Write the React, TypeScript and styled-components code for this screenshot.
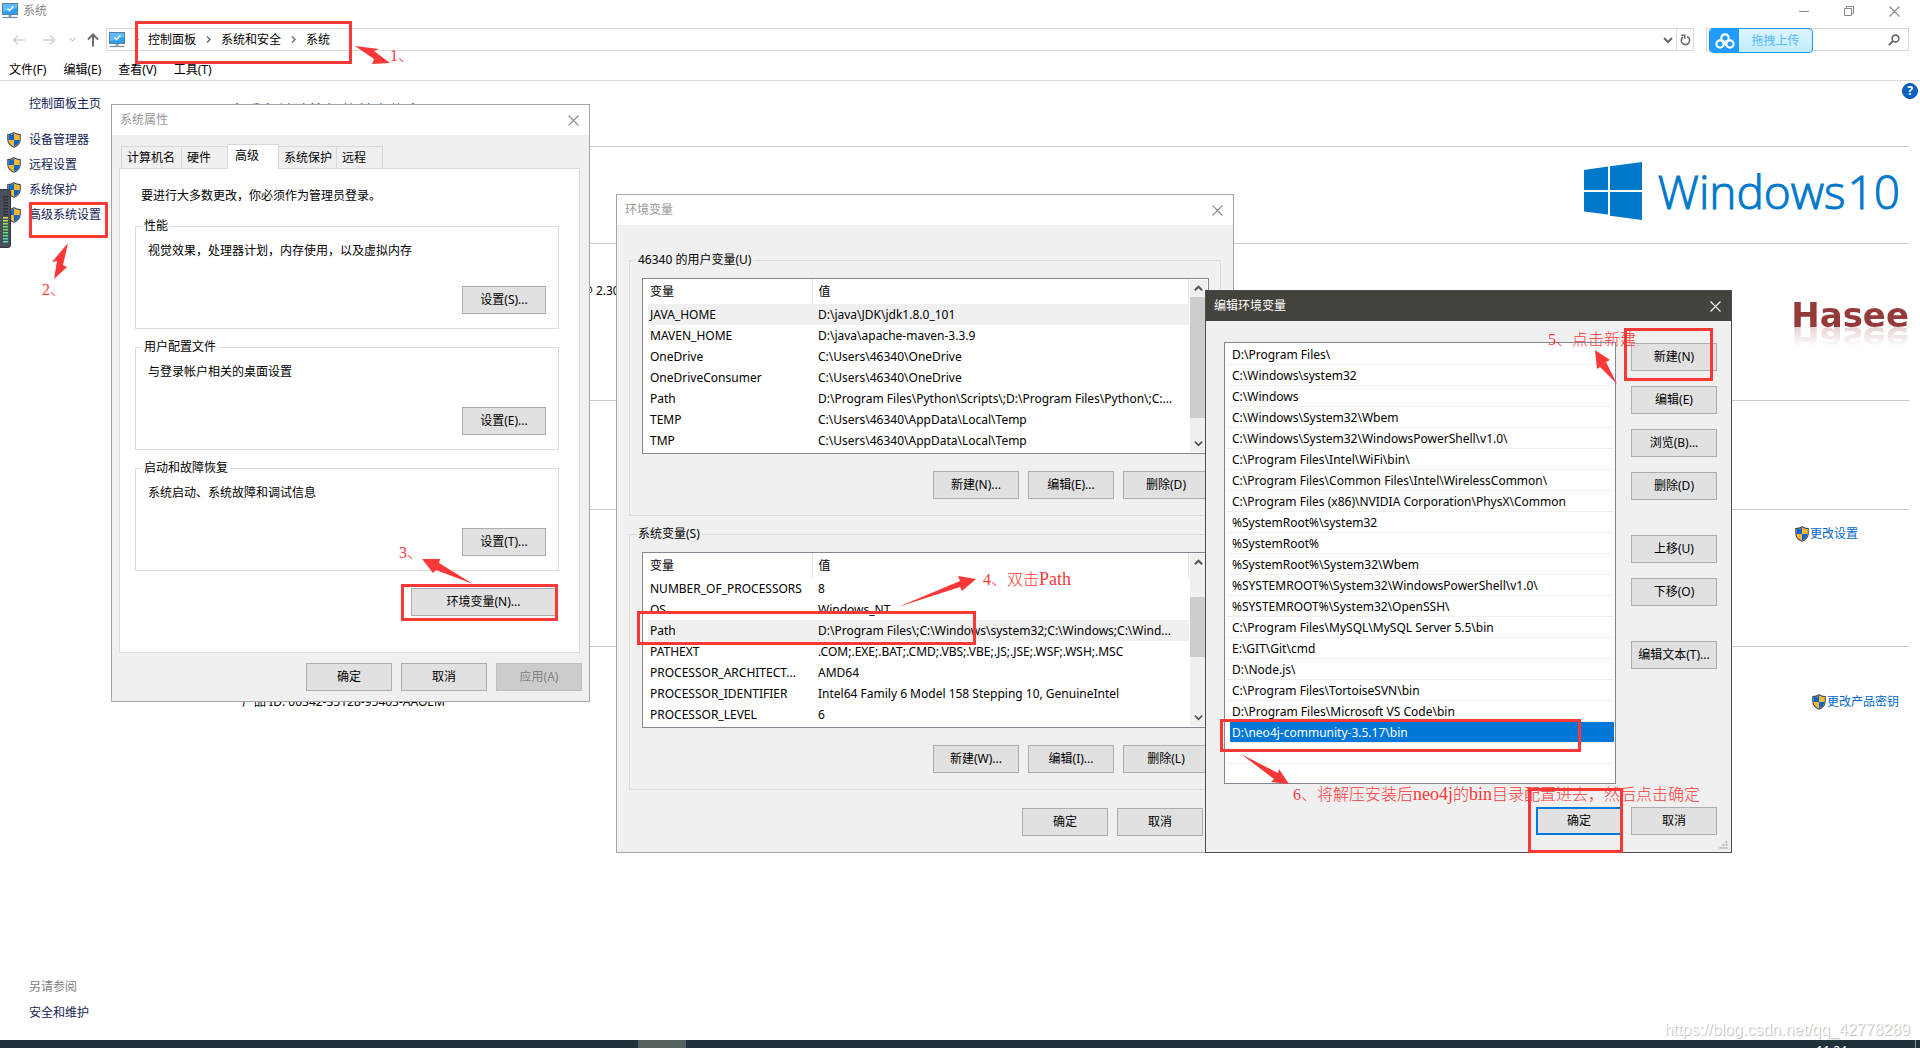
import React from 'react';
import styled, { createGlobalStyle, css } from 'styled-components';

const RED = '#fb3838';
const UI_FONT = '"Noto Sans", "Noto Sans CJK SC", sans-serif';

const GlobalStyle = createGlobalStyle`
  *, *::before, *::after { box-sizing: border-box; }
  body {
    margin: 0;
    background: #fff;
    color: #000;
    font: 12px/16px ${UI_FONT};
    overflow: hidden;
  }
  button, input { font: inherit; color: inherit; }
  a { color: inherit; text-decoration: none; }
  svg { display: block; flex: none; }
`;

/* ---------- Desktop and system window ---------- */

const Desktop = styled.div`
  position: relative;
  height: 100vh;
  display: flex;
  flex-direction: column;
  overflow: hidden;
`;

const SystemWindow = styled.main`
  flex: 1;
  min-height: 0;
  display: flex;
  flex-direction: column;
`;

const WindowTitle = styled.header`
  display: flex;
  align-items: center;
  justify-content: space-between;
  height: 22px;
  padding: 0 20px 0 2px;
  color: #888;
`;

const TitleText = styled.div`
  display: flex;
  align-items: center;
  gap: 5px;
`;

const WindowControls = styled.div`
  display: flex;
  gap: 35px;
`;

const IconButton = styled.button<{ $width?: number }>`
  display: flex;
  align-items: center;
  justify-content: center;
  width: ${p => (p.$width ? `${p.$width}px` : 'auto')};
  padding: 0;
  border: 0;
  background: none;
`;

const NavRow = styled.div`
  display: flex;
  height: 23px;
  margin-top: 6px;
  padding: 0 11px 0 4px;
`;

const CrumbChevron = styled.span`
  display: flex;
  justify-content: center;
  width: 7px;
  margin: 0 9px;
`;

const AddressBar = styled.nav`
  flex: 1;
  display: flex;
  align-items: center;
  padding-left: 2px;
  border: 1px solid #d9d9d9;
  ${CrumbChevron}:first-of-type { margin: 0 8px; }
`;

const AddressButtons = styled.div`
  display: flex;
  align-self: stretch;
  margin-left: auto;
`;

const RefreshCell = styled.div`
  display: flex;
  border-left: 1px solid #d9d9d9;
`;

const SearchBox = styled.div`
  display: flex;
  width: 203px;
  margin-left: 12px;
  padding-left: 2px;
  border: 1px solid #d9d9d9;
`;

const SearchInput = styled.input`
  flex: 1;
  min-width: 0;
  border: 0;
  outline: 0;
  background: none;
`;

const UploadButton = styled.button`
  display: flex;
  align-items: center;
  flex: none;
  width: 104px;
  height: 25px;
  margin-top: -1px;
  padding: 0;
  overflow: hidden;
  border: 1px solid #1a97ff;
  border-radius: 4px;
  background: linear-gradient(#ddf4fe, #c3edff);
  color: #55b9fb;
`;

const UploadMark = styled.span`
  display: flex;
  align-items: center;
  justify-content: center;
  width: 29px;
  height: 25px;
  background: #229bff;
`;

const UploadLabel = styled.span`
  flex: 1;
  text-align: center;
`;

const MenuBar = styled.nav`
  display: flex;
  gap: 17px;
  height: 30px;
  padding: 11px 0 0 9px;
  border-bottom: 1px solid #dadada;
`;

const MenuItem = styled.button`
  height: 16px;
  padding: 0;
  border: 0;
  background: none;
`;

const WindowBody = styled.div`
  flex: 1;
  display: flex;
  min-height: 0;
`;

const Sidebar = styled.aside`
  display: flex;
  flex-direction: column;
  width: 224px;
  padding: 15px 0 19px 7px;
  color: #151c55;
`;

const SideLinks = styled.ul`
  margin: 15px 0 0;
  padding: 0;
  list-style: none;
`;

const SideItem = styled.li`
  display: flex;
  align-items: center;
  height: 25px;
`;

const ShieldLink = styled.a<{ $gap: number; $color?: string }>`
  display: inline-flex;
  align-items: center;
  gap: ${p => p.$gap}px;
  color: ${p => p.$color ?? 'inherit'};
`;

const SideHome = styled.a`
  margin-left: 22px;
`;

const SeeAlso = styled.div`
  display: flex;
  flex-direction: column;
  gap: 10px;
  margin: auto 0 0 22px;
`;

const SeeAlsoTitle = styled.span`
  color: #808080;
`;

const Content = styled.section`
  position: relative;
  flex: 1;
  padding-right: 11px;
`;

const ContentTitle = styled.h1`
  height: 65px;
  margin: 0;
  padding: 20px 0 0 5px;
  color: #003399;
  font-size: 16px;
  line-height: 20px;
  font-weight: 400;
`;

const HelpButton = styled.button`
  position: absolute;
  top: 2px;
  right: 2px;
  width: 16px;
  height: 16px;
  padding: 0;
  border: 1px solid #0a4f9c;
  border-radius: 50%;
  background: #0a62c9;
  color: #fff;
  font-weight: 700;
  line-height: 14px;
  text-align: center;
`;

const InfoSection = styled.div<{ $height: number; $top: number; $right?: number }>`
  display: flex;
  align-items: flex-start;
  justify-content: space-between;
  min-height: ${p => p.$height}px;
  padding: ${p => p.$top}px ${p => p.$right ?? 0}px 0 18px;
  border-top: 1px solid #cbcbcb;
`;

const WindowsBrand = styled.div`
  display: flex;
  align-items: center;
  gap: 16px;
  margin-left: auto;
  color: #0078ca;
  font: 300 46px/58px "Open Sans", sans-serif;
  -webkit-text-stroke: 1px #0078ca;
`;

const WindowsWord = styled.span`
  display: flex;
  gap: 2px;
`;

const Hasee = styled.div`
  margin-top: 18px;
  color: #953a3a;
  font: 700 34px/28px "DejaVu Sans", sans-serif;
  -webkit-box-reflect: below -4px linear-gradient(transparent 20%, rgba(0, 0, 0, 0.25));
`;

const CpuText = styled.span`
  padding-left: 340px;
  white-space: pre;
`;

const Taskbar = styled.footer`
  display: flex;
  justify-content: space-between;
  height: 8px;
  padding: 0 4px 0 638px;
  overflow: hidden;
  background: #20323b;
`;

const TaskbarApp = styled.span`
  width: 48px;
  background: #56615f;
`;

const Clock = styled.time`
  padding: 3px 68px 0 0;
  border-right: 1px solid #8a9296;
  color: #fff;
`;

/* ---------- Dialogs ---------- */

const DialogFrame = styled.section<{ $left: number; $top: number; $width: number; $active?: boolean }>`
  position: absolute;
  left: ${p => p.$left}px;
  top: ${p => p.$top}px;
  width: ${p => p.$width}px;
  border: 1px solid ${p => (p.$active ? '#4c4c4c' : '#a6a6a6')};
  background: #f0f0f0;
`;

const DialogTitle = styled.header<{ $active?: boolean }>`
  display: flex;
  align-items: center;
  justify-content: space-between;
  height: 30px;
  padding: 0 10px 0 8px;
  background: ${p => (p.$active ? '#43423d' : '#fff')};
  color: ${p => (p.$active ? '#fff' : '#999')};
`;

const DialogBody = styled.div<{ $padding: string }>`
  padding: ${p => p.$padding};
`;

const PushButton = styled.button<{ $width?: number; $primary?: boolean }>`
  width: ${p => p.$width ?? 86}px;
  height: 28px;
  padding: 0;
  border: ${p => (p.$primary ? '2px solid #0078d7' : '1px solid #adadad')};
  background: #e1e1e1;
  white-space: nowrap;
  &:disabled {
    border-color: #bfbfbf;
    background: #ccc;
    color: #838383;
  }
`;

const ButtonRow = styled.div<{ $top: number }>`
  display: flex;
  justify-content: flex-end;
  gap: 9px;
  margin-top: ${p => p.$top}px;
`;

const Group = styled.fieldset<{ $top: number }>`
  min-width: 0;
  margin: ${p => p.$top}px 0 0;
  padding: 0;
  border: 1px solid #dcdcdc;
`;

const GroupTitle = styled.legend`
  height: 16px;
  margin-left: 6px;
  padding: 0 2px;
`;

const GroupBody = styled.div<{ $padding: string }>`
  padding: ${p => p.$padding};
`;

const Text = styled.p<{ $indent?: number }>`
  margin: 0 0 0 ${p => p.$indent ?? 0}px;
`;

const Tabs = styled.div`
  display: flex;
  align-items: flex-end;
  padding-left: 2px;
`;

const Tab = styled.button<{ $width: number; $selected?: boolean }>`
  width: ${p => p.$width}px;
  height: 22px;
  padding: 0 0 0 5px;
  border: 1px solid #d9d9d9;
  border-width: 1px 1px 0 0;
  background: #f0f0f0;
  text-align: left;
  &:first-child { border-left-width: 1px; }
  ${p =>
    p.$selected &&
    css`
      position: relative;
      height: 25px;
      margin-bottom: -1px;
      padding: 0 0 3px 7px;
      background: #fff;
    `}
`;

const TabPanel = styled.div`
  margin-right: 2px;
  padding: 19px 20px 36px 15px;
  border: 1px solid #dcdcdc;
  background: #fff;
`;

const EnvButtonRow = styled(ButtonRow)`
  padding-right: 3px;
`;

/* ---------- Variable lists ---------- */

const ListView = styled.div`
  display: flex;
  height: 176px;
  padding-left: 5px;
  border: 1px solid #828790;
  background: #fff;
`;

const VarTable = styled.table`
  flex: 1;
  align-self: flex-start;
  table-layout: fixed;
  border-collapse: collapse;
  th {
    height: 25px;
    padding: 0 0 0 2px;
    border-right: 1px solid #e5e5e5;
    font-weight: 400;
    text-align: left;
  }
  td {
    height: 21px;
    padding: 0 0 0 2px;
    overflow: hidden;
    white-space: nowrap;
  }
  th + th, td + td { padding-left: 6px; }
`;

const NameCol = styled.col`
  width: 164px;
`;

const VarRow = styled.tr<{ $selected: boolean }>`
  background: ${p => (p.$selected ? '#f0f0f0' : 'transparent')};
`;

const ScrollBar = styled.div`
  display: flex;
  flex-direction: column;
  width: 17px;
  margin: 1px;
  background: #f0f0f0;
`;

const ScrollTrack = styled.div<{ $before: number }>`
  flex: 1;
  padding-top: ${p => p.$before}px;
`;

const ScrollThumb = styled.div<{ $size: number }>`
  height: ${p => p.$size}px;
  background: #cdcdcd;
`;

const ScrollArrow = styled.button`
  display: flex;
  align-items: center;
  justify-content: center;
  height: 17px;
  padding: 0;
  border: 0;
  background: #f0f0f0;
`;

/* ---------- Path editor ---------- */

const EditorColumns = styled.div`
  display: flex;
  gap: 15px;
`;

const PathList = styled.ul`
  flex: 1;
  margin: 0;
  padding: 1px 1px 19px;
  border: 1px solid #828790;
  background: #fff;
  list-style: none;
`;

const PathItem = styled.li`
  height: 21px;
  padding-left: 4px;
  border-bottom: 1px solid #f0f0f0;
`;

const PathText = styled.span<{ $selected: boolean }>`
  display: block;
  height: 20px;
  padding-left: 2px;
  line-height: 22px;
  ${p =>
    p.$selected &&
    css`
      background: #0078d7;
      color: #fff;
    `}
`;

const EditorButtons = styled.div`
  display: flex;
  flex-direction: column;
  gap: 35px;
  padding-top: 1px;
`;

const ButtonStack = styled.div`
  display: flex;
  flex-direction: column;
  gap: 15px;
`;

const Grip = styled.div`
  position: absolute;
  right: 3px;
  bottom: 2px;
`;

/* ---------- Overlays ---------- */

const Marker = styled.div<{ $x: number; $y: number; $w: number; $h: number }>`
  position: absolute;
  left: ${p => p.$x}px;
  top: ${p => p.$y}px;
  width: ${p => p.$w}px;
  height: ${p => p.$h}px;
  border: 3px solid ${RED};
  pointer-events: none;
`;

const Note = styled.div<{ $x: number; $y: number }>`
  position: absolute;
  left: ${p => p.$x}px;
  top: ${p => p.$y}px;
  color: ${RED};
  font: 300 16px/20px "Liberation Serif", "Noto Sans CJK SC", serif;
  white-space: nowrap;
`;

const NoteWord = styled.span`
  font-size: 18px;
`;

const Arrows = styled.svg`
  position: absolute;
  left: 0;
  top: 0;
  pointer-events: none;
`;

const LevelWidget = styled.div`
  position: absolute;
  left: -3px;
  top: 189px;
  width: 14px;
  height: 59px;
  border: 1px solid #343741;
  border-radius: 3px;
  background: #4b4e5b;
`;

const Watermark = styled.div`
  position: absolute;
  right: 10px;
  bottom: 8px;
  color: rgba(255, 255, 255, 0.9);
  font: 16px/20px "Liberation Sans", sans-serif;
  text-shadow: 1px 1px 1px #bbb;
`;

/* ---------- Icons ---------- */

const MonitorIcon = () => (
  <svg width="16" height="16" viewBox="0 0 16 16" aria-hidden="true">
    <rect x="0.5" y="0.5" width="15" height="11" fill="#2f9df2" stroke="#5a7f9e" />
    <path d="M1 1h14v4L1 9z" fill="#5cbcfb" />
    <path d="M5.5 5.5l2 2.2 4-4.4" fill="none" stroke="#fff" strokeWidth="1.4" />
    <path d="M6.5 12h3v2h-3z" fill="#8fa3b5" />
    <path d="M0.5 14.5h15" stroke="#7590a8" strokeWidth="1.2" />
  </svg>
);

const ShieldIcon = () => (
  <svg width="14" height="16" viewBox="0 0 14 16" aria-hidden="true">
    <path d="M7 1.6C5.5 2.7 3.6 3.2 1.4 3.2V8H7z" fill="#0b66c8" />
    <path d="M7 1.6c1.500 1.100 3.400 1.600 5.600 1.600V8H7z" fill="#fdb92b" />
    <path d="M1.400 8c.2 3 2.400 5 5.600 6.500V8z" fill="#fdb92b" />
    <path d="M12.600 8c-.2 3-2.400 5-5.600 6.500V8z" fill="#0b66c8" />
    <path
      d="M7 .8C5.400 2 3.300 2.600.8 2.600v4.800c0 3.600 2.300 6 6.200 7.800 3.900-1.800 6.200-4.200 6.200-7.800V2.600C10.700 2.600 8.600 2 7 .8z"
      fill="none"
      stroke="#4b4b4b"
      strokeWidth="1.2"
    />
  </svg>
);

const ArrowIcon = ({ dir }: { dir: 'left' | 'right' | 'up' }) => (
  <svg width="14" height="14" viewBox="0 0 14 14" fill="none" aria-hidden="true">
    {dir === 'left' && <path d="M13 7H1.500M6 2.500L1.500 7 6 11.500" stroke="#cfcfcf" strokeWidth="1.4" />}
    {dir === 'right' && <path d="M1 7h11.500M8 2.500L12.500 7 8 11.500" stroke="#cfcfcf" strokeWidth="1.4" />}
    {dir === 'up' && <path d="M7 13.500V2M2 6.500L7 1.500l5 5" stroke="#6d6d6d" strokeWidth="2" />}
  </svg>
);

const ChevronDown = ({ color, size, weight = 2 }: { color: string; size: number; weight?: number }) => (
  <svg width={size} height={size} viewBox="0 0 10 10" fill="none" aria-hidden="true">
    <path d="M1 3l4 4 4-4" stroke={color} strokeWidth={weight} />
  </svg>
);

const ChevronUp = () => (
  <svg width="9" height="9" viewBox="0 0 10 10" fill="none" aria-hidden="true">
    <path d="M1 7l4-4 4 4" stroke="#555" strokeWidth="2.2" />
  </svg>
);

const ChevronRight = () => (
  <svg width="7" height="9" viewBox="0 0 7 9" fill="none" aria-hidden="true">
    <path d="M2 1.500l3 3-3 3" stroke="#6a6a6a" strokeWidth="1.4" />
  </svg>
);

const CloseIcon = ({ color }: { color: string }) => (
  <svg width="11" height="11" viewBox="0 0 11 11" aria-hidden="true">
    <path d="M.5.5l10 10M10.500.5l-10 10" stroke={color} strokeWidth="1.1" />
  </svg>
);

const MinimizeIcon = () => (
  <svg width="10" height="10" viewBox="0 0 10 10" aria-hidden="true">
    <path d="M0 5.500h10" stroke="#888" />
  </svg>
);

const RestoreIcon = () => (
  <svg width="10" height="10" viewBox="0 0 10 10" fill="none" aria-hidden="true">
    <path d="M.5 2.500h7v7h-7zM2.500 2.500v-2h7v7h-2" stroke="#888" />
  </svg>
);

const RefreshIcon = () => (
  <svg width="11" height="12" viewBox="0 0 11 12" fill="none" aria-hidden="true">
    <path d="M7.200 2.600A4.200 4.200 0 1 1 3 3" stroke="#6e6e6e" strokeWidth="1.600" />
    <path d="M1.200 1.200h3.600v3.600" stroke="#6e6e6e" strokeWidth="1.500" />
  </svg>
);

const SearchIcon = () => (
  <svg width="12" height="12" viewBox="0 0 12 12" fill="none" aria-hidden="true">
    <circle cx="7.500" cy="4.500" r="3.400" stroke="#666" strokeWidth="1.600" />
    <path d="M5 7L.8 11.200" stroke="#666" strokeWidth="1.800" />
  </svg>
);

const CloudIcon = () => (
  <svg width="20" height="16" viewBox="0 0 20 16" fill="none" stroke="#fff" strokeWidth="2.200" aria-hidden="true">
    <circle cx="10" cy="5" r="3.700" />
    <circle cx="5" cy="11" r="3.600" />
    <circle cx="15" cy="11" r="3.600" />
    <path d="M7.500 8.500l5 5" />
  </svg>
);

const WindowsLogo = () => (
  <svg width="58" height="58" viewBox="0 0 58 58" fill="#0078ca" aria-hidden="true">
    <path d="M0 8l24-3.400V28H0zM26 4.300L58 0v28H26zM0 30h24v22.600L0 49.400zM26 30h32v28l-32-4.300z" />
  </svg>
);

const GripIcon = () => (
  <svg width="9" height="9" viewBox="0 0 9 9" fill="#b9b9b9" aria-hidden="true">
    <path d="M6.500 0h2v2h-2zM3.500 3h2v2h-2zM6.500 3h2v2h-2zM.5 6h2v2h-2zM3.500 6h2v2h-2zM6.500 6h2v2h-2z" />
  </svg>
);

const LevelBars = () => (
  <svg width="12" height="57" viewBox="0 0 12 57" aria-hidden="true">
    {Array.from({ length: 16 }, (_, i) => (
      <rect
        key={i}
        x="5"
        y={6 + i * 3}
        width="5"
        height="1.500"
        fill={i < 7 ? '#2f323b' : `hsl(${70 + (i - 7) * 12}, 75%, 62%)`}
      />
    ))}
  </svg>
);

/* ---------- Data ---------- */

type Variable = [name: string, value: string];

const userVars: Variable[] = [
  ['JAVA_HOME', 'D:\\java\\JDK\\jdk1.8.0_101'],
  ['MAVEN_HOME', 'D:\\java\\apache-maven-3.3.9'],
  ['OneDrive', 'C:\\Users\\46340\\OneDrive'],
  ['OneDriveConsumer', 'C:\\Users\\46340\\OneDrive'],
  ['Path', 'D:\\Program Files\\Python\\Scripts\\;D:\\Program Files\\Python\\;C:...'],
  ['TEMP', 'C:\\Users\\46340\\AppData\\Local\\Temp'],
  ['TMP', 'C:\\Users\\46340\\AppData\\Local\\Temp'],
];

const systemVars: Variable[] = [
  ['NUMBER_OF_PROCESSORS', '8'],
  ['OS', 'Windows_NT'],
  ['Path', 'D:\\Program Files\\;C:\\Windows\\system32;C:\\Windows;C:\\Wind...'],
  ['PATHEXT', '.COM;.EXE;.BAT;.CMD;.VBS;.VBE;.JS;.JSE;.WSF;.WSH;.MSC'],
  ['PROCESSOR_ARCHITECT...', 'AMD64'],
  ['PROCESSOR_IDENTIFIER', 'Intel64 Family 6 Model 158 Stepping 10, GenuineIntel'],
  ['PROCESSOR_LEVEL', '6'],
];

const paths = [
  'D:\\Program Files\\',
  'C:\\Windows\\system32',
  'C:\\Windows',
  'C:\\Windows\\System32\\Wbem',
  'C:\\Windows\\System32\\WindowsPowerShell\\v1.0\\',
  'C:\\Program Files\\Intel\\WiFi\\bin\\',
  'C:\\Program Files\\Common Files\\Intel\\WirelessCommon\\',
  'C:\\Program Files (x86)\\NVIDIA Corporation\\PhysX\\Common',
  '%SystemRoot%\\system32',
  '%SystemRoot%',
  '%SystemRoot%\\System32\\Wbem',
  '%SYSTEMROOT%\\System32\\WindowsPowerShell\\v1.0\\',
  '%SYSTEMROOT%\\System32\\OpenSSH\\',
  'C:\\Program Files\\MySQL\\MySQL Server 5.5\\bin',
  'E:\\GIT\\Git\\cmd',
  'D:\\Node.js\\',
  'C:\\Program Files\\TortoiseSVN\\bin',
  'D:\\Program Files\\Microsoft VS Code\\bin',
  'D:\\neo4j-community-3.5.17\\bin',
  '',
];

const arrowShapes = [
  '355,46 379,49 374,51 390,63 372,64 374,59',
  '68,243 52,262 57,261 54,279 67,267 63,265',
  '473,584 439,563 440,559 422,559 433,573 436,570',
  '898,607 960,581 958,576 976,579 962,591 960,587',
  '1617,384 1606,362 1610,360 1595,350 1597,369 1600,367',
  '1241,754 1278,773 1279,769 1289,784 1271,782 1274,779',
];

const markers = [
  [135, 21, 217, 43],
  [29, 202, 79, 36],
  [401, 584, 157, 37],
  [637, 611, 339, 34],
  [1624, 328, 89, 53],
  [1220, 719, 361, 33],
  [1528, 788, 95, 65],
];

/* ---------- Components ---------- */

const Dialog = ({
  title,
  left,
  top,
  width,
  active,
  children,
}: {
  title: string;
  left: number;
  top: number;
  width: number;
  active?: boolean;
  children: React.ReactNode;
}) => (
  <DialogFrame role="dialog" aria-label={title} $left={left} $top={top} $width={width} $active={active}>
    <DialogTitle $active={active}>
      <span>{title}</span>
      <IconButton aria-label="关闭">
        <CloseIcon color={active ? '#fff' : '#8c8c8c'} />
      </IconButton>
    </DialogTitle>
    {children}
  </DialogFrame>
);

const SettingsGroup = ({ title, text, button, top }: { title: string; text: string; button: string; top: number }) => (
  <Group $top={top}>
    <GroupTitle>{title}</GroupTitle>
    <GroupBody $padding="9px 12px 14px">
      <Text>{text}</Text>
      <ButtonRow $top={27}>
        <PushButton $width={84}>{button}</PushButton>
      </ButtonRow>
    </GroupBody>
  </Group>
);

const VariableGroup = ({
  title,
  rows,
  selected,
  buttons,
  top,
  thumb,
}: {
  title: string;
  rows: Variable[];
  selected: number;
  buttons: string[];
  top: number;
  thumb: [before: number, size: number];
}) => (
  <Group $top={top}>
    <GroupTitle>{title}</GroupTitle>
    <GroupBody $padding="10px 11px 16px 12px">
      <ListView>
        <VarTable>
          <colgroup>
            <NameCol />
            <col />
          </colgroup>
          <thead>
            <tr>
              <th scope="col">变量</th>
              <th scope="col">值</th>
            </tr>
          </thead>
          <tbody>
            {rows.map(([name, value], i) => (
              <VarRow key={name} $selected={i === selected}>
                <td>{name}</td>
                <td>{value}</td>
              </VarRow>
            ))}
          </tbody>
        </VarTable>
        <ScrollBar>
          <ScrollArrow aria-label="向上滚动">
            <ChevronUp />
          </ScrollArrow>
          <ScrollTrack $before={thumb[0]}>
            <ScrollThumb $size={thumb[1]} />
          </ScrollTrack>
          <ScrollArrow aria-label="向下滚动">
            <ChevronDown color="#555" size={9} />
          </ScrollArrow>
        </ScrollBar>
      </ListView>
      <ButtonRow $top={17}>
        {buttons.map(b => (
          <PushButton key={b}>{b}</PushButton>
        ))}
      </ButtonRow>
    </GroupBody>
  </Group>
);

export default function App() {
  return (
    <Desktop>
      <GlobalStyle />
      <SystemWindow>
        <WindowTitle>
          <TitleText>
            <MonitorIcon />
            <span>系统</span>
          </TitleText>
          <WindowControls>
            <IconButton aria-label="最小化"><MinimizeIcon /></IconButton>
            <IconButton aria-label="还原"><RestoreIcon /></IconButton>
            <IconButton aria-label="关闭"><CloseIcon color="#888" /></IconButton>
          </WindowControls>
        </WindowTitle>
        <NavRow>
          <IconButton $width={30} aria-label="后退"><ArrowIcon dir="left" /></IconButton>
          <IconButton $width={30} aria-label="前进"><ArrowIcon dir="right" /></IconButton>
          <IconButton $width={16} aria-label="最近"><ChevronDown color="#cfcfcf" size={7} /></IconButton>
          <IconButton $width={26} aria-label="向上"><ArrowIcon dir="up" /></IconButton>
          <AddressBar aria-label="地址">
            <MonitorIcon />
            <CrumbChevron><ChevronRight /></CrumbChevron>
            <a href="#panel">控制面板</a>
            <CrumbChevron><ChevronRight /></CrumbChevron>
            <a href="#security">系统和安全</a>
            <CrumbChevron><ChevronRight /></CrumbChevron>
            <a href="#system">系统</a>
            <AddressButtons>
              <IconButton $width={16} aria-label="展开"><ChevronDown color="#666" size={10} /></IconButton>
              <RefreshCell>
                <IconButton $width={16} aria-label="刷新"><RefreshIcon /></IconButton>
              </RefreshCell>
            </AddressButtons>
          </AddressBar>
          <SearchBox>
            <UploadButton>
              <UploadMark><CloudIcon /></UploadMark>
              <UploadLabel>拖拽上传</UploadLabel>
            </UploadButton>
            <SearchInput type="search" aria-label="搜索控制面板" />
            <IconButton $width={28} aria-label="搜索"><SearchIcon /></IconButton>
          </SearchBox>
        </NavRow>
        <MenuBar>
          <MenuItem>文件(F)</MenuItem>
          <MenuItem>编辑(E)</MenuItem>
          <MenuItem>查看(V)</MenuItem>
          <MenuItem>工具(T)</MenuItem>
        </MenuBar>
        <WindowBody>
          <Sidebar>
            <SideHome href="#home">控制面板主页</SideHome>
            <SideLinks>
              {['设备管理器', '远程设置', '系统保护', '高级系统设置'].map(label => (
                <SideItem key={label}>
                  <ShieldLink href="#settings" $gap={8}>
                    <ShieldIcon />
                    {label}
                  </ShieldLink>
                </SideItem>
              ))}
            </SideLinks>
            <SeeAlso>
              <SeeAlsoTitle>另请参阅</SeeAlsoTitle>
              <a href="#maintenance">安全和维护</a>
            </SeeAlso>
          </Sidebar>
          <Content>
            <HelpButton aria-label="帮助">?</HelpButton>
            <ContentTitle>查看有关计算机的基本信息</ContentTitle>
            <InfoSection $height={97} $top={15} $right={9}>
              <WindowsBrand>
                <WindowsLogo />
                <WindowsWord>
                  <span>Windows</span>
                  <span>10</span>
                </WindowsWord>
              </WindowsBrand>
            </InfoSection>
            <InfoSection $height={157} $top={39}>
              <CpuText>@ 2.30GHz</CpuText>
              <Hasee>Hasee</Hasee>
            </InfoSection>
            <InfoSection $height={109} $top={0} />
            <InfoSection $height={137} $top={16} $right={51}>
              <span />
              <ShieldLink href="#change" $gap={1} $color="#0066cc">
                <ShieldIcon />
                更改设置
              </ShieldLink>
            </InfoSection>
            <InfoSection $height={80} $top={47} $right={10}>
              <span>产品 ID: 00342-35128-95403-AAOEM</span>
              <ShieldLink href="#key" $gap={1} $color="#0066cc">
                <ShieldIcon />
                更改产品密钥
              </ShieldLink>
            </InfoSection>
          </Content>
        </WindowBody>
      </SystemWindow>

      <Taskbar>
        <TaskbarApp />
        <Clock>11:24</Clock>
      </Taskbar>

      <Dialog title="系统属性" left={111} top={104} width={479}>
        <DialogBody $padding="9px 7px 10px">
          <Tabs role="tablist">
            <Tab role="tab" $width={61}>计算机名</Tab>
            <Tab role="tab" $width={46}>硬件</Tab>
            <Tab role="tab" aria-selected $width={51} $selected>高级</Tab>
            <Tab role="tab" $width={58}>系统保护</Tab>
            <Tab role="tab" $width={46}>远程</Tab>
          </Tabs>
          <TabPanel role="tabpanel">
            <Text $indent={6}>要进行大多数更改，你必须作为管理员登录。</Text>
            <SettingsGroup title="性能" text="视觉效果，处理器计划，内存使用，以及虚拟内存" button="设置(S)..." top={14} />
            <SettingsGroup title="用户配置文件" text="与登录帐户相关的桌面设置" button="设置(E)..." top={10} />
            <SettingsGroup title="启动和故障恢复" text="系统启动、系统故障和调试信息" button="设置(T)..." top={10} />
            <EnvButtonRow $top={17}>
              <PushButton $width={145}>环境变量(N)...</PushButton>
            </EnvButtonRow>
          </TabPanel>
          <ButtonRow $top={10}>
            <PushButton>确定</PushButton>
            <PushButton>取消</PushButton>
            <PushButton disabled>应用(A)</PushButton>
          </ButtonRow>
        </DialogBody>
      </Dialog>

      <Dialog title="环境变量" left={616} top={194} width={618}>
        <DialogBody $padding="27px 12px 16px">
          <VariableGroup
            title="46340 的用户变量(U)"
            rows={userVars}
            selected={0}
            buttons={['新建(N)...', '编辑(E)...', '删除(D)']}
            top={0}
            thumb={[0, 121]}
          />
          <VariableGroup
            title="系统变量(S)"
            rows={systemVars}
            selected={2}
            buttons={['新建(W)...', '编辑(I)...', '删除(L)']}
            top={10}
            thumb={[26, 60]}
          />
          <GroupBody $padding="0 18px 0 0">
            <ButtonRow $top={18}>
              <PushButton>确定</PushButton>
              <PushButton>取消</PushButton>
            </ButtonRow>
          </GroupBody>
        </DialogBody>
      </Dialog>

      <Dialog title="编辑环境变量" left={1205} top={290} width={527} active>
        <DialogBody $padding="21px 14px 17px 18px">
          <EditorColumns>
            <PathList>
              {paths.map((path, i) => (
                <PathItem key={i}>
                  <PathText $selected={i === 18}>{path}</PathText>
                </PathItem>
              ))}
            </PathList>
            <EditorButtons>
              <ButtonStack>
                <PushButton>新建(N)</PushButton>
                <PushButton>编辑(E)</PushButton>
                <PushButton>浏览(B)...</PushButton>
                <PushButton>删除(D)</PushButton>
              </ButtonStack>
              <ButtonStack>
                <PushButton>上移(U)</PushButton>
                <PushButton>下移(O)</PushButton>
              </ButtonStack>
              <PushButton>编辑文本(T)...</PushButton>
            </EditorButtons>
          </EditorColumns>
          <ButtonRow $top={23}>
            <PushButton $primary>确定</PushButton>
            <PushButton>取消</PushButton>
          </ButtonRow>
        </DialogBody>
        <Grip><GripIcon /></Grip>
      </Dialog>

      <LevelWidget><LevelBars /></LevelWidget>

      {markers.map(([x, y, w, h]) => (
        <Marker key={`${x}-${y}`} $x={x} $y={y} $w={w} $h={h} />
      ))}
      <Arrows width="1920" height="1048" viewBox="0 0 1920 1048" fill={RED} aria-hidden="true">
        {arrowShapes.map(points => (
          <polygon key={points} points={points} />
        ))}
      </Arrows>
      <Note $x={390} $y={46}>1、</Note>
      <Note $x={42} $y={280}>2、</Note>
      <Note $x={399} $y={543}>3、</Note>
      <Note $x={983} $y={569}>4、双击<NoteWord>Path</NoteWord></Note>
      <Note $x={1548} $y={330}>5、点击新建</Note>
      <Note $x={1293} $y={784}>
        6、将解压安装后<NoteWord>neo4j</NoteWord>的<NoteWord>bin</NoteWord>目录配置进去，然后点击确定
      </Note>

      <Watermark>https://blog.csdn.net/qq_42778289</Watermark>
    </Desktop>
  );
}
